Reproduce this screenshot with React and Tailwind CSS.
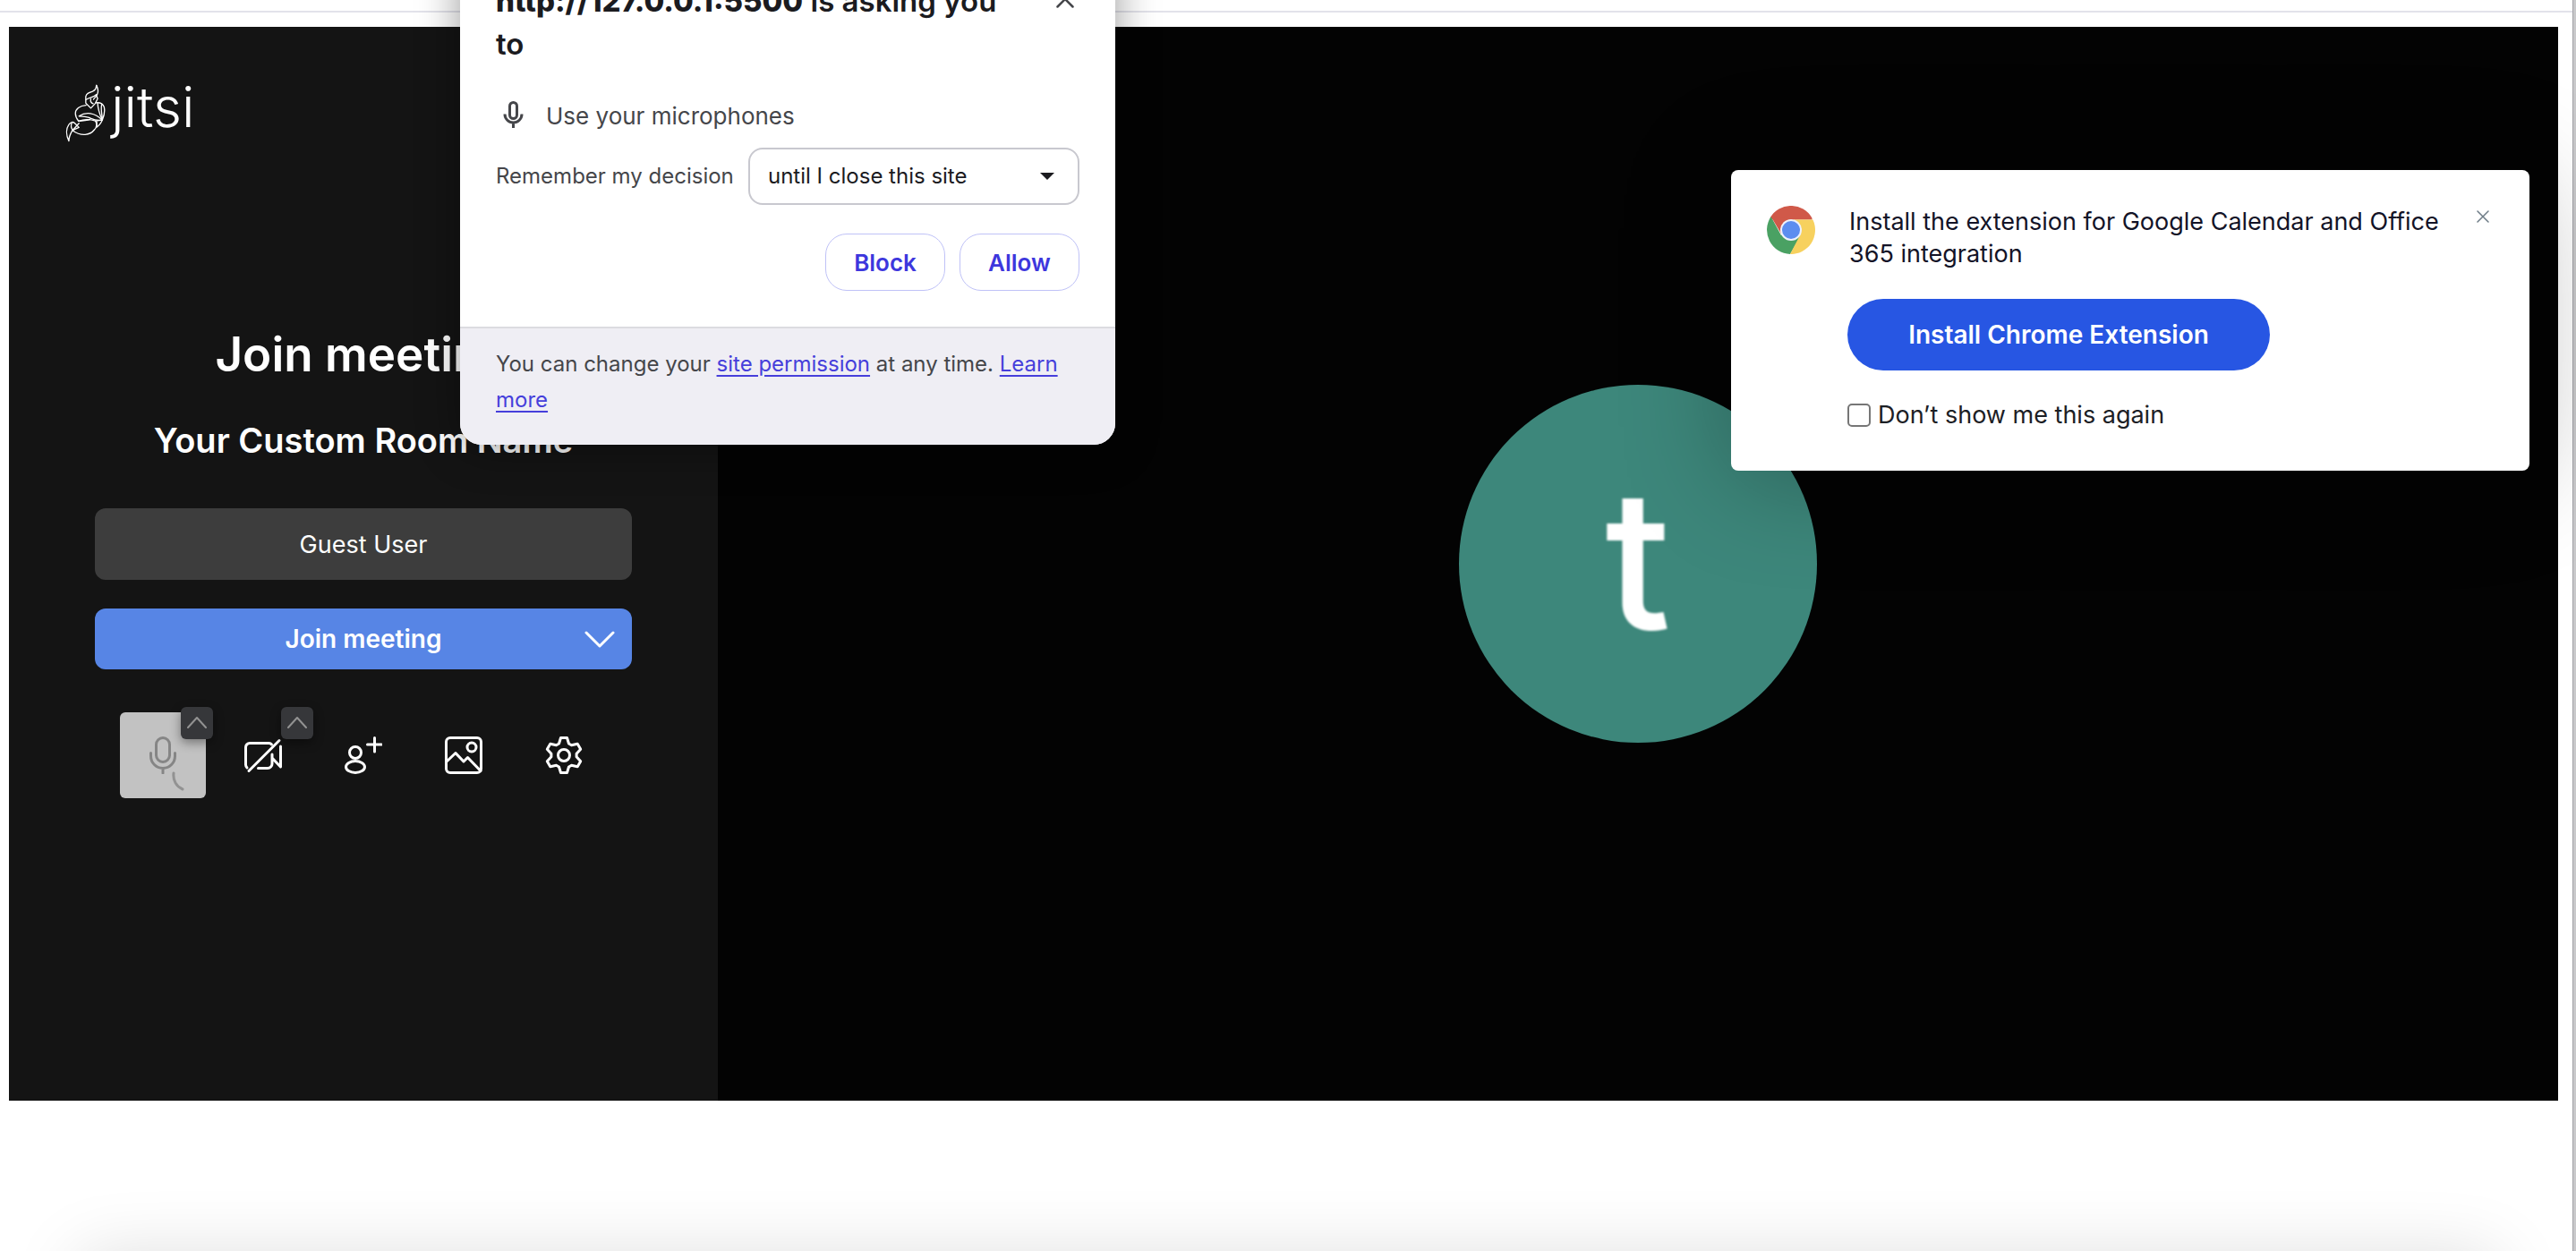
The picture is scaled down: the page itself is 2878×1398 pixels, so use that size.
import React from "react";

function JitsiBird() {
  return (
    <svg viewBox="40 40 136 196" className="h-[65px] w-[45px]" fill="none" stroke="white" strokeWidth="4" strokeLinecap="round" strokeLinejoin="round" aria-hidden="true">
      <path d="M145 44c-2 12-3 16-13 20c-14 5-21 8-23 18v22l17 17l15-16l8-16l-5-14" />
      <path d="M145 44c5 10 8 19 3 30c-4 9-9 13-13 17" />
      <path d="M110 92c10-7 24-7 34-16M126 90c-2 8 2 14 8 16" />
      <path d="M110 111c-22 1-36 14-36 28c0 10 4 18 11 26c18-4 30-2 38-6" />
      <path d="M143 103c14-2 24 4 28 14c3 14 0 30-6 44c-5 12-12 20-20 24" />
      <path d="M149 104c1 20 8 40 15 56M163 108c-4 14 0 32 2 48" />
      <path d="M86 148c24-16 54-12 78 13c-20 4-30-2-44-8c-12-5-22-5-34-5Z" />
      <path d="M84 165c16-6 36-8 58-1c6 12 4 22-4 30c-14 18-44 24-74 2l22-24" />
      <path d="M146 164v20M142 164l22-3" />
      <path d="M52 232c-10-20-10-42 0-56c6-9 14-10 20-4l14 14l-22 10c-6 10-12 20-12 36Z" />
      <path d="M62 170c-4 10-2 20 4 26" />
    </svg>
  );
}

function ChromeLogo() {
  return (
    <svg viewBox="0 0 54 54" className="size-[54px] shrink-0" aria-hidden="true">
      <path d="M27 27L3.6 13.5A27 27 0 0 1 50.4 13.5L50.6 15.5H27Z" fill="#d05949" />
      <path d="M4.6 12A27 27 0 0 0 26 54L38 33L27 27L16 33Z" fill="#4aa163" />
      <path d="M27 15.5H51.4A27 27 0 0 1 26 54L37 33Z" fill="#f7d15e" />
      <path d="M4.6 12L17 33L27 27L30 15Z" fill="#d05949" />
      <circle cx="27" cy="27" r="12" fill="#eef1fb" />
      <circle cx="27" cy="27" r="10" fill="#5c8df0" />
    </svg>
  );
}

const line = { fill: "none", stroke: "currentColor", strokeLinecap: "round", strokeLinejoin: "round" };

function MicIcon() {
  return (
    <svg viewBox="0 0 42 42" className="size-[42px]" strokeWidth="3" {...line} aria-hidden="true">
      <rect x="13.5" y="1.5" width="15" height="27" rx="7.5" />
      <path d="M7.500 18.500V22a13.500 13.500 0 0 0 27 0V18.500M21 35.500V41" />
    </svg>
  );
}

function VideoOffIcon() {
  return (
    <svg viewBox="0 0 42 42" className="size-[42px]" strokeWidth="3" {...line} aria-hidden="true">
      <path d="M3 35a5 5 0 0 1-1.500-3.500V12a4.500 4.500 0 0 1 4.500-4.500H27.500a4.500 4.500 0 0 1 3 1.500" />
      <path d="M15.500 35.500H26a5 5 0 0 0 5-5V24l9.500 10V11M31 24v-4" />
      <path d="M39 4.500L5 38.500" />
    </svg>
  );
}

function InviteIcon() {
  return (
    <svg viewBox="0 0 42 42" className="size-[42px]" strokeWidth="3" {...line} aria-hidden="true">
      <circle cx="12" cy="18" r="6.500" />
      <ellipse cx="12" cy="34" rx="10.500" ry="6.500" />
      <path d="M33.500 1.500V17M25.500 9H41" />
    </svg>
  );
}

function ImageIcon() {
  return (
    <svg viewBox="0 0 42 42" className="size-[42px]" strokeWidth="3" {...line} aria-hidden="true">
      <rect x="1.500" y="1.500" width="39" height="39" rx="4.500" />
      <circle cx="30" cy="12" r="5" />
      <path d="M2 28L12 18.500L21 28L25.500 23.500L40 38.500" />
    </svg>
  );
}

function GearIcon() {
  return (
    <svg viewBox="0 0 42 42" className="size-[42px]" strokeWidth="3" {...line} aria-hidden="true">
      <circle cx="21" cy="21" r="6.500" />
      <path d="M17.500 1.500h7l2 6.500l3 1.700l6.700-1.500l3.500 6l-4.600 5v3.600l4.600 5l-3.500 6l-6.700-1.500l-3 1.700l-2 6.500h-7l-2-6.500l-3-1.700l-6.700 1.500l-3.500-6l4.600-5v-3.600l-4.600-5l3.500-6l6.700 1.500l3-1.700Z" />
    </svg>
  );
}

function ToolButton({ label, menuLabel, busy, children }) {
  return (
    <div className="relative size-24">
      <button
        type="button"
        aria-label={label}
        className={busy ? "grid size-24 place-items-center rounded-md bg-[#c2c2c2] text-[#858585]" : "grid size-24 place-items-center rounded-md text-white"}
      >
        {children}
      </button>
      {busy && (
        <svg viewBox="0 0 14 22" className="absolute right-6 bottom-2 h-[22px] w-3.5" strokeWidth="3" {...line} stroke="#929292" aria-hidden="true">
          <path d="M2 2C1 10 5 17 12 20" />
        </svg>
      )}
      {menuLabel && (
        <button
          type="button"
          aria-label={menuLabel}
          className="absolute -top-1.5 -right-2 grid size-9 place-items-center rounded-md bg-[#36373a] text-[#929292] shadow-[0_4px_12px_rgba(0,0,0,0.4)]"
        >
          <svg viewBox="0 0 22 14" className="h-3.5 w-[22px]" strokeWidth="2" {...line} aria-hidden="true">
            <path d="M1 12L11 1L21 12" />
          </svg>
        </button>
      )}
    </div>
  );
}

function PrejoinPanel() {
  return (
    <section className="flex w-[792px] shrink-0 flex-col items-center bg-[#141414] pt-14 text-white">
      <div className="flex h-20 items-center gap-1.5 self-start pl-[63px]">
        <JitsiBird />
        <span className="pb-3 text-[62px] leading-none font-light">jitsi</span>
      </div>
      <h1 className="mt-[198px] text-[53px] leading-[64px] font-semibold">Join meeting</h1>
      <h2 className="mt-10 text-[38px] leading-[48px] font-semibold">Your Custom Room Name</h2>
      <input
        type="text"
        aria-label="Your name"
        defaultValue="Guest User"
        className="mt-[52px] h-20 w-[600px] rounded-xl bg-[#3d3d3d] text-center text-[27px] outline-none"
      />
      <div className="relative mt-8 w-[600px]">
        <button type="button" className="h-[68px] w-full rounded-xl bg-[#5785e5] text-[28px] font-semibold">
          Join meeting
        </button>
        <button type="button" aria-label="More join options" className="absolute inset-y-0 right-0 grid w-[72px] place-items-center">
          <svg viewBox="0 0 34 19" className="h-[19px] w-[34px]" strokeWidth="3" {...line} aria-hidden="true">
            <path d="M2 2L17 17L32 2" />
          </svg>
        </button>
      </div>
      <div className="mt-12 flex gap-4">
        <ToolButton label="Microphone" menuLabel="Audio settings" busy><MicIcon /></ToolButton>
        <ToolButton label="Start camera" menuLabel="Video settings"><VideoOffIcon /></ToolButton>
        <ToolButton label="Invite people"><InviteIcon /></ToolButton>
        <ToolButton label="Select background"><ImageIcon /></ToolButton>
        <ToolButton label="Settings"><GearIcon /></ToolButton>
      </div>
    </section>
  );
}

function ExtensionBanner() {
  return (
    <aside className="absolute top-[160px] right-8 flex w-[892px] gap-9 rounded-lg bg-white px-10 pt-10 pb-11 text-[27px] leading-9 shadow-[0_8px_120px_rgba(0,0,0,0.3)]">
      <ChromeLogo />
      <div className="flex-1">
        <p className="w-[680px] pl-0.5 text-[#131327]">Install the extension for Google Calendar and Office 365 integration</p>
        <button type="button" className="mt-8 block h-20 w-[472px] rounded-full bg-[#2756e3] text-[28px] font-semibold text-white">
          Install Chrome Extension
        </button>
        <label className="mt-8 flex items-center gap-2 text-[#1c2025]">
          <input type="checkbox" className="size-[26px] appearance-none rounded-[5px] border-2 border-[#767676] bg-white" />
          Don’t show me this again
        </label>
      </div>
      <button type="button" aria-label="Close" className="absolute top-[45px] right-[45px] text-[#6d7b86]">
        <svg viewBox="0 0 14 14" className="size-3.5" strokeWidth="1.500" {...line} aria-hidden="true">
          <path d="M1 1L13 13M13 1L1 13" />
        </svg>
      </button>
    </aside>
  );
}

function PermissionPopup() {
  return (
    <div role="dialog" aria-label="Microphone permission" className="absolute -top-[63px] left-[514px] w-[732px] overflow-hidden rounded-3xl bg-white shadow-[0_4px_48px_rgba(0,0,0,0.4)]">
      <div className="px-10 pt-10 pb-10">
        <div className="flex items-start justify-between">
          <p className="w-[580px] text-[33px] leading-[48px] font-semibold text-[#1b1b1f]">
            <b className="font-extrabold">http://127.0.0.1:5500</b> is asking you to
          </p>
          <button type="button" aria-label="Close" className="mt-3 mr-1.5 text-[#45464a]">
            <svg viewBox="0 0 20 20" className="size-5" strokeWidth="2.500" {...line} aria-hidden="true">
              <path d="M1.500 1.500L18.500 18.500M18.500 1.500L1.500 18.500" />
            </svg>
          </button>
        </div>
        <div className="mt-9 flex h-10 items-center gap-4 text-[26px] text-[#45464a]">
          <svg viewBox="0 0 40 40" className="size-10" strokeWidth="3" {...line} strokeLinecap="butt" aria-hidden="true">
            <rect x="15.500" y="5.500" width="8" height="18" rx="4" />
            <path d="M10 18.500a9.500 9.500 0 0 0 19 0M19.500 28V34" />
          </svg>
          Use your microphones
        </div>
        <div className="mt-4 flex items-center justify-between">
          <label htmlFor="remember" className="text-[24px] whitespace-nowrap text-[#45464a]">Remember my decision</label>
          <div className="relative">
            <select id="remember" className="h-16 w-[370px] appearance-none rounded-2xl border-2 border-[#c8c8cf] bg-white pl-5 text-[24px] text-[#1b1b1f]">
              <option>until I close this site</option>
            </select>
            <svg viewBox="0 0 16 8" className="pointer-events-none absolute top-7 right-7 h-2 w-4" fill="#1b1b1f" aria-hidden="true">
              <path d="M0 0H16L8 8Z" />
            </svg>
          </div>
        </div>
        <div className="mt-8 flex justify-end gap-4 text-[26px] font-semibold text-[#3d37dd]">
          <button type="button" className="h-16 w-[134px] rounded-3xl border border-[#bfc2f7]">Block</button>
          <button type="button" className="h-16 w-[134px] rounded-3xl border border-[#bfc2f7]">Allow</button>
        </div>
      </div>
      <div className="border-t-2 border-[#dcdce0] bg-[#efeef4] px-10 pt-5 pb-[30px] text-[24px] leading-10 text-[#45464a]">
        You can change your <a href="#permissions" className="text-[#463fdb] underline underline-offset-4">site permission</a> at any time.{" "}
        <a href="#learn" className="text-[#463fdb] underline underline-offset-4">Learn more</a>
      </div>
    </div>
  );
}

export default function App() {
  return (
    <div className="relative flex min-h-screen overflow-hidden bg-white font-['Inter',sans-serif]">
      <div className="flex flex-1 flex-col">
        <div className="h-3.5 border-b-2 border-[#e2e2ea]" />
        <main className="relative mt-4 mr-4 ml-2.5 flex h-[1200px]">
          <PrejoinPanel />
          <section className="grid flex-1 place-items-center bg-[#030303]">
            <div className="grid size-[400px] place-items-center rounded-full bg-[#3d877b] pb-2.5 text-[216px] leading-none font-medium text-white">
              <span className="blur-[1px]">t</span>
            </div>
          </section>
          <ExtensionBanner />
        </main>
      </div>
      <div className="w-1 border-l border-[#a3a3a8] bg-[#c9c9cb]" />
      <div className="pointer-events-none absolute inset-x-[90px] top-full mt-2 h-20 shadow-[0_0_80px_rgba(0,0,0,0.15)]" />
      <PermissionPopup />
    </div>
  );
}
